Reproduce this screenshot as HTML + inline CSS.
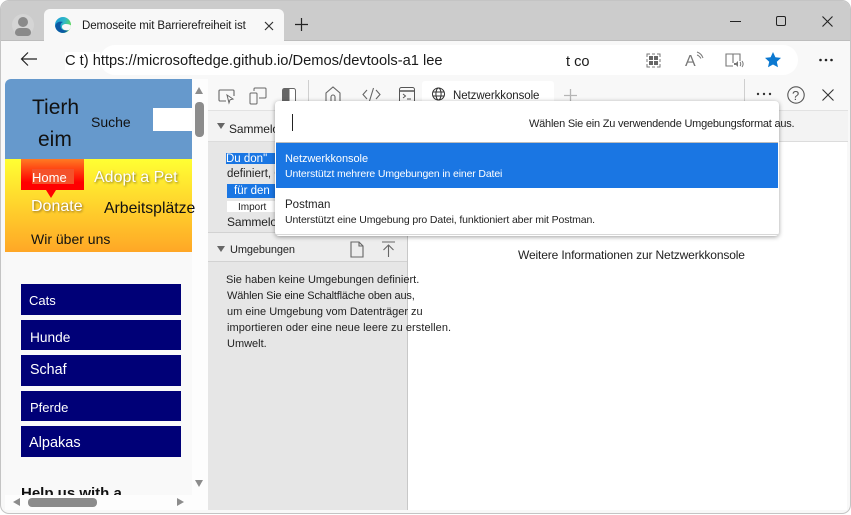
<!DOCTYPE html>
<html lang="de"><head><meta charset="utf-8"><title>Demoseite</title>
<style>
html,body{margin:0;padding:0;width:851px;height:515px;overflow:hidden;background:#fff;font-family:"Liberation Sans",sans-serif;color:#111}
#w{position:absolute;left:0;top:0;width:851px;height:515px;overflow:hidden}
.a,.t{position:absolute}
.t{white-space:nowrap;line-height:1}
svg{position:absolute;overflow:visible}
.nav{position:absolute;left:21px;width:160px;background:#000077}
</style></head><body><div id="w">
<div class="a" style="left:0;top:0;width:849px;height:512px;border:1px solid #c4c4c4;border-radius:9px;background:#f8f8f8;overflow:hidden"></div>
<div class="a" style="left:1px;top:1px;width:849px;height:40px;background:#cccccc;border-radius:8px 8px 0 0"></div>
<div class="a" style="left:1px;top:40px;width:849px;height:1px;background:#bdbdbd"></div>

<!-- profile -->
<div class="a" style="left:12px;top:14px;width:22px;height:22px;border-radius:50%;background:#d5d5d5;border:0 solid"></div>
<div class="a" style="left:18px;top:17px;width:10px;height:10px;border-radius:50%;background:#8a8a8a"></div>
<div class="a" style="left:15px;top:28px;width:16px;height:8px;border-radius:8px 8px 6px 6px;background:#8a8a8a"></div>

<!-- tab -->
<div class="a" style="left:44px;top:9px;width:240px;height:33px;background:#f8f8f8;border-radius:6px 6px 0 0"></div>
<svg style="left:55px;top:17px" width="16" height="16" viewBox="0 0 16 16"><defs><linearGradient id="e1" x1="0" y1="0" x2="1" y2="0.4"><stop offset="0" stop-color="#1c9ad6"/><stop offset=".6" stop-color="#2fb8c8"/><stop offset="1" stop-color="#5ad85f"/></linearGradient></defs><circle cx="8" cy="8" r="8" fill="url(#e1)"/><path d="M.2 9C1 5 5 4 8 5c-2.500 1-3 3.500-2 6 1 2 4 3 7.500 2-2 2.500-5.500 3.500-8 2.500C2.500 14.500.5 12 .2 9z" fill="#0c59a4"/><path d="M7 9.500c0-1.500 2-2.500 4-2.500 2 0 4 .5 5 1.500 0 2-1 3.500-2 4.500-2.500.8-5.500 0-6.500-1.500-.5-.7-.5-1.300-.5-2z" fill="#f8f8f8"/></svg>
<div class="t" style="left:82px;top:21px;font-size:11.500px;letter-spacing:-.09px;color:#1a1a1a">Demoseite mit Barrierefreiheit ist</div>
<svg style="left:264px;top:21px" width="10" height="10"><path d="M1 1l8 8M9 1l-8 8" stroke="#333" stroke-width="1.200" fill="none"/></svg>
<svg style="left:294px;top:17px" width="15" height="15"><path d="M7.500 1v13M1 7.500h13" stroke="#222" stroke-width="1.200" fill="none"/></svg>
<!-- window controls -->
<div class="a" style="left:730px;top:21px;width:11px;height:1px;background:#222"></div>
<div class="a" style="left:776px;top:16px;width:8px;height:8px;border:1.200px solid #222;border-radius:2px"></div>
<svg style="left:822px;top:16px" width="11" height="11"><path d="M.5.500l10 10M10.500.500l-10 10" stroke="#222" stroke-width="1.100" fill="none"/></svg>

<!-- address bar -->
<div class="a" style="left:100px;top:45px;width:698px;height:30px;background:#fff;border-radius:15px"></div>
<svg style="left:20px;top:51px" width="18" height="16"><path d="M17 8H1.500M8 1.500L1.500 8 8 14.500" stroke="#222" stroke-width="1.200" fill="none"/></svg>
<div class="a" style="left:65px;top:52px;width:35px;height:18px;background:#fff"></div>
<div class="t" style="left:65px;top:54px;font-size:14.680px;color:#1a1a1a">C t) https://microsoftedge.github.io/Demos/devtools-a1 lee</div>
<div class="t" style="left:566px;top:55px;font-size:14.600px;color:#1a1a1a">t co</div>
<svg style="left:646px;top:53px" width="15" height="15"><path d="M1 4V1h3M11 1h3v3M14 11v3h-3M4 14H1v-3M6 1h3M6 14h3M1 6v3M14 6v3" stroke="#777" fill="none"/><rect x="3" y="3" width="4" height="4" fill="#666"/><rect x="8" y="3" width="4" height="4" fill="#666"/><rect x="3" y="8" width="4" height="4" fill="#666"/><rect x="8" y="8" width="4" height="4" fill="#666"/></svg>
<div class="t" style="left:685px;top:54px;font-size:16px;color:#777">A</div>
<svg style="left:695px;top:51px" width="12" height="12"><path d="M2 1c3 1 5 3 6 6M2 4c2 .5 3 2 4 3.500" stroke="#777" fill="none"/></svg>
<svg style="left:725px;top:52px" width="19" height="17"><path d="M8 14H1V2h14v7M8 2v9" stroke="#777" stroke-width="1.100" fill="none"/><path d="M9 11h2l2-2v6l-2-2H9z" fill="#777"/><path d="M15 10c1 1 1 3 0 4M17 9c1.500 2 1.500 4 0 6" stroke="#777" fill="none"/></svg>
<svg style="left:764px;top:51px" width="18" height="18" viewBox="0 0 18 18"><path d="M9 1l2.400 5.300 5.600.6-4.200 3.800 1.200 5.600L9 13.500l-5 2.800 1.200-5.600L1 6.900l5.600-.6z" fill="#0b78d0"/></svg>
<svg style="left:818px;top:56px" width="16" height="8"><circle cx="2.500" cy="4" r="1.300" fill="#222"/><circle cx="8" cy="4" r="1.300" fill="#222"/><circle cx="13.500" cy="4" r="1.300" fill="#222"/></svg>

<!-- page content -->
<div class="a" style="left:5px;top:79px;width:187px;height:416px;background:#f9f9f9;overflow:hidden;border-radius:6px 0 0 0">
  <div class="a" style="left:0;top:0;width:187px;height:80px;background:#6699cc"></div>
  <div class="a" style="left:0;top:80px;width:187px;height:93px;background:linear-gradient(#ffff33,#ffa726)"></div>
  <div class="t" style="left:27px;top:18px;font-size:21px;color:#111">Tierh</div>
  <div class="t" style="left:33px;top:50px;font-size:21px;color:#111">eim</div>
  <div class="t" style="left:86px;top:36px;font-size:14px;color:#111">Suche</div>
  <div class="a" style="left:148px;top:29px;width:39px;height:23px;background:#fff"></div>
  <div class="a" style="left:16px;top:80px;width:63px;height:31px;background:linear-gradient(#ff7a22,#ff0000 75%)"></div>
  <div class="a" style="left:41px;top:111px;width:0;height:0;border-left:5px solid transparent;border-right:5px solid transparent;border-top:8px solid #ff0000"></div>
  <div class="a" style="left:27px;top:90px;width:42px;height:15px;background:#f4512a"></div>
  <div class="t" style="left:27px;top:92px;font-size:13px;color:#fff">Home</div>
  <div class="t" style="left:89px;top:91px;font-size:16px;color:#fff;text-shadow:1px 1px 2px #8a7a20">Adopt a Pet</div>
  <div class="t" style="left:26px;top:120px;font-size:16px;color:#fff;text-shadow:1px 1px 2px #8a6a20">Donate</div>
  <div class="t" style="left:26px;top:153px;font-size:14px;color:#111">Wir über uns</div>
  <div class="t" style="left:16px;top:407px;font-size:15px;font-weight:bold;color:#111">Help us with a</div>
</div>
<div class="nav" style="top:284px;height:31px"></div>
<div class="nav" style="top:320px;height:30px"></div>
<div class="nav" style="top:355px;height:31px"></div>
<div class="nav" style="top:391px;height:30px"></div>
<div class="nav" style="top:426px;height:31px"></div>
<div class="t" style="left:29px;top:294px;font-size:13px;color:#fff">Cats</div>
<div class="t" style="left:30px;top:331px;font-size:13.700px;color:#fff">Hunde</div>
<div class="t" style="left:30px;top:363px;font-size:14.300px;color:#fff">Schaf</div>
<div class="t" style="left:30px;top:401px;font-size:13px;color:#fff">Pferde</div>
<div class="t" style="left:29px;top:436px;font-size:14.500px;color:#fff">Alpakas</div>

<!-- scrollbars -->
<div class="a" style="left:192px;top:79px;width:16px;height:431px;background:#fdfdfd"></div>
<div class="a" style="left:5px;top:495px;width:203px;height:15px;background:#fdfdfd"></div>
<div class="t" style="left:104px;top:201px;font-size:15.800px;color:#111">Arbeitsplätze</div>
<div class="a" style="left:195px;top:87px;width:0;height:0;border-left:4.500px solid transparent;border-right:4.500px solid transparent;border-bottom:7px solid #8c8c8c"></div>
<div class="a" style="left:195px;top:102px;width:9px;height:35px;background:#8c8c8c;border-radius:4px"></div>
<div class="a" style="left:195px;top:480px;width:0;height:0;border-left:4.500px solid transparent;border-right:4.500px solid transparent;border-top:7px solid #8c8c8c"></div>
<div class="a" style="left:13px;top:498px;width:0;height:0;border-top:4.500px solid transparent;border-bottom:4.500px solid transparent;border-right:7px solid #8c8c8c"></div>
<div class="a" style="left:28px;top:498px;width:69px;height:9px;background:#8c8c8c;border-radius:4px"></div>
<div class="a" style="left:177px;top:498px;width:0;height:0;border-top:4.500px solid transparent;border-bottom:4.500px solid transparent;border-left:7px solid #8c8c8c"></div>

<!-- devtools -->
<div class="a" style="left:208px;top:79px;width:640px;height:32px;background:#f8f8f8"></div>
<div class="a" style="left:208px;top:111px;width:640px;height:31px;background:#f3f3f3"></div>
<div class="a" style="left:208px;top:142px;width:200px;height:368px;background:#e6e6e6;border-right:1px solid #c8c8c8;box-sizing:border-box"></div>
<div class="a" style="left:208px;top:110px;width:640px;height:1px;background:#e2e2e2"></div>
<div class="a" style="left:208px;top:141px;width:640px;height:1px;background:#dcdcdc"></div>
<div class="a" style="left:408px;top:142px;width:439px;height:368px;background:#fff"></div>
<div class="a" style="left:208px;top:232px;width:199px;height:30px;background:#ededed;border-top:1px solid #d2d2d2;border-bottom:1px solid #d2d2d2;box-sizing:border-box"></div>

<svg style="left:218px;top:88px" width="18" height="17"><path d="M8 13H2a1 1 0 0 1-1-1V3a1 1 0 0 1 1-1h13a1 1 0 0 1 1 1v5" stroke="#666" stroke-width="1.100" fill="none"/><path d="M9 7l6 4-3 .8-1 3z" fill="#fff" stroke="#666"/></svg>
<svg style="left:249px;top:87px" width="18" height="18"><rect x="1" y="6" width="7" height="11" rx="1" stroke="#666" fill="none"/><path d="M5 4V2a1 1 0 0 1 1-1h10a1 1 0 0 1 1 1v8a1 1 0 0 1-1 1h-6" stroke="#666" fill="none"/></svg>
<svg style="left:282px;top:88px" width="15" height="16"><rect x=".5" y=".5" width="13" height="15" rx="2" fill="#fff" stroke="#666"/><rect x=".5" y=".5" width="7" height="15" rx="1" fill="#666"/></svg>
<div class="a" style="left:308px;top:80px;width:1px;height:30px;background:#cfcfcf"></div>
<svg style="left:325px;top:86px" width="16" height="18"><path d="M1 17V7l7-6 7 6v10zM6 17v-6a2 2 0 0 1 4 0v6" stroke="#666" stroke-width="1.100" fill="none"/></svg>
<svg style="left:362px;top:87px" width="19" height="15"><path d="M5 3L1 7.500 5 12M14 3l4 4.500L14 12M11.500 1L7.500 14" stroke="#666" stroke-width="1.100" fill="none"/></svg>
<svg style="left:399px;top:87px" width="17" height="17"><rect x=".5" y=".5" width="15" height="15" rx="2" stroke="#555" fill="none"/><path d="M1 4h14" stroke="#555" stroke-width="1.500"/><path d="M4 7l2.500 2L4 11M8 12h4" stroke="#555" fill="none"/></svg>
<div class="a" style="left:422px;top:81px;width:132px;height:30px;background:#fff;border-radius:3px 3px 0 0"></div>
<svg style="left:431px;top:87px" width="16" height="16" viewBox="0 0 16 16"><circle cx="7.500" cy="7" r="6" stroke="#333" fill="none"/><ellipse cx="7.500" cy="7" rx="2.600" ry="6" stroke="#333" fill="none"/><path d="M2 5h11M2 9h11" stroke="#333" fill="none"/><path d="M1 15h4M11 15h4" stroke="#333"/></svg>
<div class="t" style="left:453px;top:91px;font-size:11.500px;letter-spacing:-.08px;color:#222">Netzwerkkonsole</div>
<svg style="left:563px;top:88px" width="15" height="15"><path d="M7.500 1v13M1 7.500h13" stroke="#b5b5b5" stroke-width="1.300" fill="none"/></svg>
<div class="a" style="left:744px;top:79px;width:1px;height:31px;background:#cfcfcf"></div>
<svg style="left:756px;top:91px" width="16" height="6"><circle cx="2" cy="3" r="1.200" fill="#333"/><circle cx="8" cy="3" r="1.200" fill="#333"/><circle cx="14" cy="3" r="1.200" fill="#333"/></svg>
<svg style="left:787px;top:86px" width="18" height="18"><circle cx="9" cy="9" r="8.200" stroke="#555" stroke-width="1.100" fill="none"/></svg>
<div class="t" style="left:792px;top:89px;font-size:13px;color:#555">?</div>
<svg style="left:822px;top:89px" width="12" height="12"><path d="M.5.500l11 11M11.500.500l-11 11" stroke="#333" stroke-width="1.100" fill="none"/></svg>

<!-- sidebar -->
<div class="a" style="left:217px;top:123px;width:0;height:0;border-left:4px solid transparent;border-right:4px solid transparent;border-top:6px solid #666"></div>
<div class="t" style="left:229px;top:123px;font-size:12px;letter-spacing:-.1px;color:#222">Sammelo-</div>
<div class="a" style="left:226px;top:153px;width:60px;height:11px;background:#1a76e3"></div>
<div class="t" style="left:226px;top:154px;font-size:11.500px;color:#fff">Du don"</div>
<div class="t" style="left:227px;top:169px;font-size:11.500px;color:#222">definiert, C</div>
<div class="a" style="left:227px;top:184px;width:60px;height:14px;background:#1a76e3"></div>
<div class="t" style="left:234px;top:186px;font-size:11.500px;color:#fff">für den</div>
<div class="a" style="left:227px;top:201px;width:60px;height:11px;background:#fff"></div>
<div class="t" style="left:238px;top:203px;font-size:10px;color:#222">Import</div>
<div class="t" style="left:227px;top:216px;font-size:12px;letter-spacing:-.1px;color:#222">Sammelo</div>

<div class="a" style="left:217px;top:246px;width:0;height:0;border-left:4px solid transparent;border-right:4px solid transparent;border-top:6px solid #666"></div>
<div class="t" style="left:230px;top:245px;font-size:11px;letter-spacing:-.12px;color:#222">Umgebungen</div>
<svg style="left:350px;top:241px" width="14" height="17"><path d="M1 1h8l4 4v11H1zM9 1v4h4" stroke="#666" stroke-width="1.100" fill="none"/></svg>
<svg style="left:381px;top:241px" width="15" height="17"><path d="M1 1h13M7.500 16V4M2.500 9l5-5 5 5" stroke="#666" stroke-width="1.100" fill="none"/></svg>
<div class="t" style="left:226px;top:275px;font-size:11px;color:#222">Sie haben keine Umgebungen definiert.</div>
<div class="t" style="left:227px;top:291px;font-size:11px;letter-spacing:-.18px;color:#222">Wählen Sie eine Schaltfläche oben aus,</div>
<div class="t" style="left:227px;top:307px;font-size:11px;color:#222">um eine Umgebung vom Datenträger zu</div>
<div class="t" style="left:227px;top:323px;font-size:11px;letter-spacing:.06px;color:#222">importieren oder eine neue leere zu erstellen.</div>
<div class="t" style="left:227px;top:339px;font-size:11px;color:#222">Umwelt.</div>

<div class="t" style="left:518px;top:249px;font-size:12px;letter-spacing:-.14px;color:#222">Weitere Informationen zur Netzwerkkonsole</div>

<!-- quick pick -->
<div class="a" style="left:275px;top:101px;width:504px;height:135px;background:#fff;border-radius:4px;box-shadow:0 1px 5px rgba(0,0,0,.38)"></div>
<div class="a" style="left:292px;top:114px;width:1px;height:17px;background:#222"></div>
<div class="t" style="left:529px;top:119px;font-size:11px;letter-spacing:-.22px;color:#222">Wählen Sie ein Zu verwendende Umgebungsformat aus.</div>
<div class="a" style="left:276px;top:142px;width:502px;height:1px;background:#bdbdbd"></div>
<div class="a" style="left:276px;top:143px;width:502px;height:45px;background:#1a76e3"></div>
<div class="t" style="left:285px;top:154px;font-size:11px;letter-spacing:-.05px;color:#fff">Netzwerkkonsole</div>
<div class="t" style="left:285px;top:169px;font-size:10.500px;letter-spacing:-.14px;color:#fff">Unterstützt mehrere Umgebungen in einer Datei</div>
<div class="t" style="left:285px;top:200px;font-size:11.500px;color:#222">Postman</div>
<div class="t" style="left:285px;top:215px;font-size:10.500px;letter-spacing:-.13px;color:#222">Unterstützt eine Umgebung pro Datei, funktioniert aber mit Postman.</div>
<div class="a" style="left:276px;top:234px;width:502px;height:1px;background:#d8d8d8"></div>
</div></body></html>
